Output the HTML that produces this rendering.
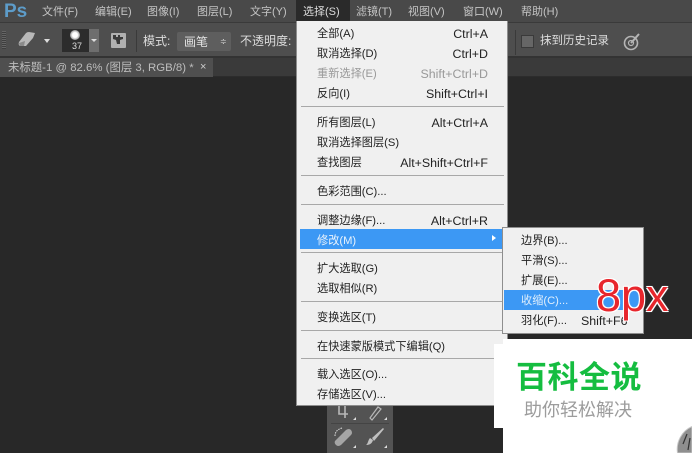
<!DOCTYPE html>
<html style="overflow:hidden"><head><meta charset="utf-8">
<style>
html,body{margin:0;padding:0;width:692px;height:453px;overflow:hidden;background:#282828}
body{font-family:"Liberation Sans","Noto Sans CJK SC",sans-serif;}
#p{position:absolute;left:0;top:0;width:692px;height:453px;overflow:hidden;background:#282828;filter:blur(0.35px)}
#p div{position:absolute}
.t{white-space:nowrap;font-size:11px;line-height:14px}
.m{color:#c4c4c4}
.i{left:20px;color:#222;white-space:nowrap;font-size:11.2px;line-height:14px;margin-top:1px}
.s{right:19px;color:#222;white-space:nowrap;font-size:12.4px;line-height:14px;margin-top:1px}
.sep{left:4px;width:203px;height:1px;background:#a8a8a8}
#p .g{color:#999}
</style></head><body><div id="p">
<div style="left:0;top:0;width:692px;height:22px;background:#494949"></div>
<div style="left:0;top:22px;width:692px;height:1px;background:#3a3a3a"></div>
<div style="left:0;top:23px;width:692px;height:33px;background:#4e4e4e"></div>
<div style="left:0;top:56px;width:692px;height:2px;background:#333"></div>
<div style="left:0;top:58px;width:692px;height:18px;background:#3a3a3a"></div>
<div style="left:0;top:58px;width:213px;height:19px;background:#4f4f4f"></div>
<div style="left:213px;top:76px;width:479px;height:1px;background:#2c2c2c"></div>

<div class="t" style="left:4px;top:0;font-size:19px;line-height:24px;font-weight:bold;color:#5d9cc9">Ps</div>
<div class="t m" style="left:42px;top:5px">文件(F)</div>
<div class="t m" style="left:95px;top:5px">编辑(E)</div>
<div class="t m" style="left:147px;top:5px">图像(I)</div>
<div class="t m" style="left:197px;top:5px">图层(L)</div>
<div class="t m" style="left:250px;top:5px">文字(Y)</div>
<div style="left:296px;top:0;width:54px;height:21px;background:#2a2a2a"></div>
<div class="t" style="left:303px;top:5px;color:#ddd">选择(S)</div>
<div class="t m" style="left:356px;top:5px">滤镜(T)</div>
<div class="t m" style="left:408px;top:5px">视图(V)</div>
<div class="t m" style="left:463px;top:5px">窗口(W)</div>
<div class="t m" style="left:521px;top:5px">帮助(H)</div>

<!-- options bar -->
<div style="left:2px;top:31px;width:4px;height:18px;background:repeating-linear-gradient(#656565 0 1px,#3e3e3e 1px 2px)"></div>
<svg style="position:absolute;left:0;top:22px" width="300" height="34">
<path d="M19 20 L26 11 Q27 10 29 10 L35 11 L33 16 L26 24 L20 24 Q18 23 19 20Z" fill="#b8b8b8"/>
<path d="M19 21 L25 19 L24 24 L20 24Z" fill="#8a8a8a"/>
<path d="M44 17h6l-3 4z" fill="#ddd"/>
<rect x="136" y="8" width="1" height="22" fill="#3a3a3a"/>
<rect x="111" y="11" width="15" height="15" rx="1" fill="#b0b0b0"/>
<path d="M113 13h3v2h2v-2h2v2h3v2l-3 1v4h-3l-1-4-3-1z" fill="#3a3a3a"/>
</svg>
<div style="left:62px;top:29px;width:27px;height:23px;background:#2c2c2c"></div>
<div style="left:89px;top:29px;width:10px;height:23px;background:#6e6e6e"></div>
<div style="left:91px;top:39px;border:3px solid transparent;border-top:3px solid #ddd"></div>
<div style="left:70px;top:30px;width:10px;height:10px;border-radius:50%;background:radial-gradient(#fff 35%,#3a3a3a 100%)"></div>
<div class="t" style="left:72px;top:41px;font-size:9px;line-height:10px;color:#ddd">37</div>
<div class="t" style="left:143px;top:34px;color:#ddd;font-size:12px">模式:</div>
<div style="left:177px;top:32px;width:54px;height:19px;background:#5e5e5e;border-radius:2px"></div>
<div class="t" style="left:184px;top:35px;color:#e2e2e2;font-size:12px">画笔</div>
<div class="t" style="left:220px;top:37px;color:#ddd;font-size:8px;line-height:9px">≑</div>
<div class="t" style="left:240px;top:34px;color:#ddd;font-size:12px">不透明度:</div>
<div style="left:515px;top:30px;width:1px;height:25px;background:#3a3a3a"></div>
<div style="left:521px;top:35px;width:11px;height:11px;background:#666;border:1px solid #3a3a3a"></div>
<div class="t" style="left:540px;top:34px;color:#ddd;font-size:11.5px">抹到历史记录</div>
<svg style="position:absolute;left:620px;top:30px" width="24" height="24">
<circle cx="11" cy="13" r="6.5" fill="none" stroke="#b5b5b5" stroke-width="1.6"/>
<circle cx="11" cy="13" r="2.5" fill="none" stroke="#b5b5b5" stroke-width="1.2"/>
<path d="M11 13L19 4" stroke="#b5b5b5" stroke-width="2"/>
</svg>

<!-- tab -->
<div class="t" style="left:8px;top:61px;color:#bdbdbd;font-size:11.4px">未标题-1 @ 82.6% (图层 3, RGB/8) *</div>
<div class="t" style="left:200px;top:60px;color:#ccc;font-size:11px">×</div>

<!-- toolbox -->
<div style="left:327px;top:400px;width:66px;height:53px;background:#535353"></div>
<div style="left:331px;top:423px;width:58px;height:1px;background:#444"></div>
<svg style="position:absolute;left:327px;top:400px" width="66" height="53">
<path d="M12 6v8h9M18 6v12" stroke="#b8b8b8" stroke-width="1.6" fill="none"/>
<path d="M43 18l8-11 3 2-9 11z" fill="none" stroke="#b8b8b8" stroke-width="1.2"/>
<path d="M8 41l11-11q3-2 5 0q2 3 0 5L14 45q-3 2-5 0q-2-2-1-4z" fill="#a5a5a5"/>
<path d="M8 36q0-6 7-8" fill="none" stroke="#ddd" stroke-width="1" stroke-dasharray="1.5 1"/>
<path d="M39 45c3 0 6-1 7-5l-3-2c-2 2-2 6-4 7z" fill="#c0c0c0"/>
<path d="M45 38l11-10 1 1-10 12z" fill="#c0c0c0"/>
<path d="M26 20h3v-3zM26 48h3v-3zM57 20h3v-3zM57 48h3v-3z" fill="#ddd"/>
</svg>

<!-- main menu -->
<div style="left:296px;top:21px;width:210px;height:384px;background:#f0f0f0;border:1px solid #8e8e8e;border-top:0;box-sizing:content-box">
<div class="i" style="top:5px">全部(A)</div><div class="s" style="top:5px">Ctrl+A</div>
<div class="i" style="top:25px">取消选择(D)</div><div class="s" style="top:25px">Ctrl+D</div>
<div class="i g" style="top:45px">重新选择(E)</div><div class="s g" style="top:45px">Shift+Ctrl+D</div>
<div class="i" style="top:65px">反向(I)</div><div class="s" style="top:65px">Shift+Ctrl+I</div>
<div class="sep" style="top:85px"></div>
<div class="i" style="top:94px">所有图层(L)</div><div class="s" style="top:94px">Alt+Ctrl+A</div>
<div class="i" style="top:114px">取消选择图层(S)</div>
<div class="i" style="top:134px">查找图层</div><div class="s" style="top:134px">Alt+Shift+Ctrl+F</div>
<div class="sep" style="top:154px"></div>
<div class="i" style="top:163px">色彩范围(C)...</div>
<div class="sep" style="top:183px"></div>
<div class="i" style="top:192px">调整边缘(F)...</div><div class="s" style="top:192px">Alt+Ctrl+R</div>
<div style="left:3px;top:208px;width:204px;height:20px;background:#3c98f4"></div>
<div class="i" style="top:212px;color:#e8f2fc">修改(M)</div>
<div style="left:195px;top:214px;border:3.5px solid transparent;border-left:4px solid #fff"></div>
<div class="sep" style="top:231px"></div>
<div class="i" style="top:240px">扩大选取(G)</div>
<div class="i" style="top:260px">选取相似(R)</div>
<div class="sep" style="top:280px"></div>
<div class="i" style="top:289px">变换选区(T)</div>
<div class="sep" style="top:309px"></div>
<div class="i" style="top:318px">在快速蒙版模式下编辑(Q)</div>
<div class="sep" style="top:337px"></div>
<div class="i" style="top:346px">载入选区(O)...</div>
<div class="i" style="top:366px">存储选区(V)...</div>
</div>

<!-- submenu -->
<div style="left:502px;top:227px;width:140px;height:105px;background:#f0f0f0;border:1px solid #8e8e8e;overflow:hidden">
<div class="i" style="left:18px;top:5px">边界(B)...</div>
<div class="i" style="left:18px;top:25px">平滑(S)...</div>
<div class="i" style="left:18px;top:45px">扩展(E)...</div>
<div style="left:1px;top:62px;width:137px;height:20px;background:#3c98f4"></div>
<div class="i" style="left:18px;top:65px;color:#dfeefc">收缩(C)...</div>
<div class="i" style="left:18px;top:85px">羽化(F)...</div>
<div class="i" style="left:78px;top:85px;font-size:12.4px">Shift+F6</div>
</div>
<div class="t" style="left:596px;top:272px;font-size:45px;line-height:48px;color:#e8262c;text-shadow:0 0 2px #fff,1px 1px 0 #fff,-1px -1px 0 #fff,1px -1px 0 #fff,-1px 1px 0 #fff">8px</div>

<!-- watermark -->
<div style="left:494px;top:344px;width:20px;height:84px;background:#fff"></div>
<div style="left:503px;top:339px;width:189px;height:114px;background:#fff"></div>
<div class="t" style="left:516px;top:358px;font-size:31px;line-height:40px;font-weight:bold;color:#15bd40;letter-spacing:0.5px">百科全说</div>
<div class="t" style="left:524px;top:399px;font-size:18px;line-height:22px;color:#9c9c9c">助你轻松解决</div>
<svg style="position:absolute;left:672px;top:423px" width="20" height="30" viewBox="0 0 20 30">
<path d="M20 3.5A25 25 0 0 0 5.5 30H20Z" fill="#8f8f8f" stroke="#c8c8c8" stroke-width="1"/>
<path d="M15 11L11 21M18 15L16 27" stroke="#333" stroke-width="1.2" fill="none"/>
</svg>
</div></body></html>
